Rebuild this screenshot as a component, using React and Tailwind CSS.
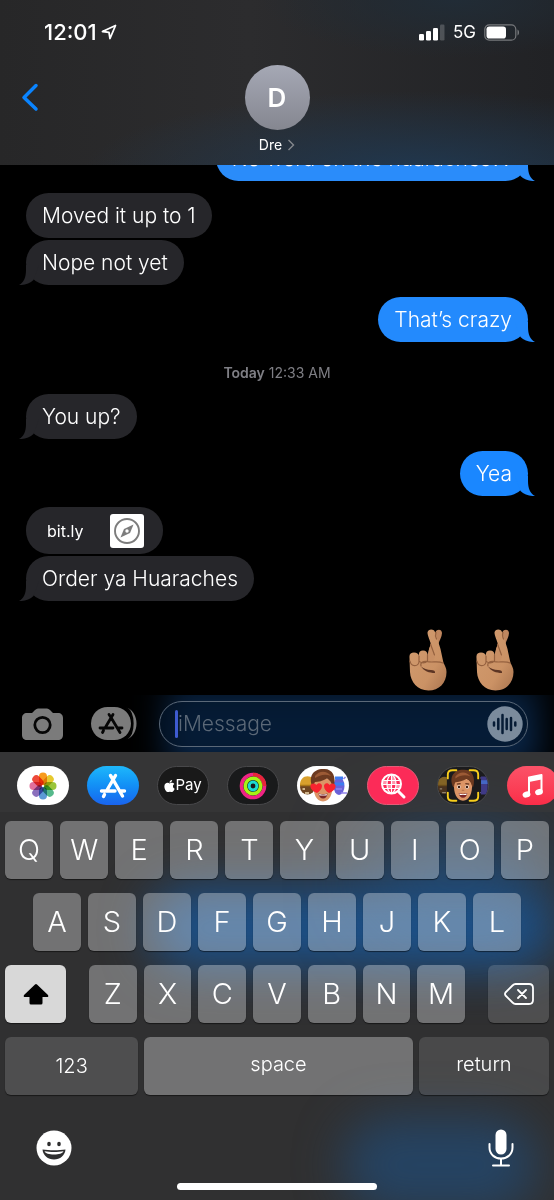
import { FaApple } from 'react-icons/fa';

function Tail({ sent }) {
  return (
    <svg
      viewBox="0 0 20 20"
      className={`absolute bottom-0 h-5 w-5 fill-current ${sent ? '-right-[7px]' : '-left-[7px] -scale-x-100'}`}
      aria-hidden="true"
    >
      <path d="M13 0V5C13 12 15 17.500 20 20C14.500 20.300 9 18.500 5.500 15L0 0Z" />
    </svg>
  );
}

function Bubble({ sent, tail, tone, children }) {
  const color = tone || (sent ? 'bg-[#1a87ff] text-[#1a87ff]' : 'bg-[#26262a] text-[#26262a]');
  return (
    <div className={`relative w-fit max-w-[80%] rounded-[23px] px-4 ${color} ${sent ? 'self-end' : 'self-start'}`}>
      {tail && <Tail sent={sent} />}
      <p className="relative whitespace-nowrap py-2 text-[21px] font-light leading-[29px] text-white">{children}</p>
    </div>
  );
}

function CrossedFingers() {
  return (
    <svg viewBox="0 0 38 62" className="h-[62px] w-[38px]" role="img" aria-label="Crossed fingers">
      <defs>
        <linearGradient id="skin" x1="0" y1="0" x2="1" y2="1">
          <stop offset="0" stopColor="#d29c70" />
          <stop offset="0.65" stopColor="#cb9265" />
          <stop offset="1" stopColor="#a9744f" />
        </linearGradient>
      </defs>
      <path d="M18 32L20 20C22 14 24 10 26.500 3C28 -0.500 33 0 33 4C33 8 30 12 29 16L26 32Z" fill="#bf865e" />
      <path
        d="M0.500 29C0 25 2 23.500 5 23.500C8 23.500 9.500 25 10 27C9.500 23 11 21.500 14 21.500C17 21.500 18.500 23 18.500 26L21 27.500L24.500 24L22 15C20 9 18.500 6 18.500 3.500C19 0 24.500 -0.500 26 3C27 7 30 14 31.500 20C32.500 25 33.500 29 34.500 34C36 37 37.500 39 37.500 43C37.500 54 30 61.500 19.500 61.500C8.500 61.500 1.500 53 1 43Z"
        fill="url(#skin)"
      />
      <path d="M18.500 26V32L24 32.500L26 28L24.500 24L22 15L20.500 19Z" fill="#c88f64" />
      <path
        d="M1 32C2 38 9 38 10 33V27M10 32C12 34.500 16 34.500 18.500 32V26M25.500 26L21.500 15M27 3.500C26 6 26.500 8 27.500 10M12 37C11 33.500 14 32 18 32.500C23 34 29 31.500 34 34"
        fill="none"
        stroke="#95613f"
        strokeWidth="1.200"
        strokeLinecap="round"
        strokeLinejoin="round"
      />
      <path d="M12 37.500C15 42 20 44 26 44C26.500 42 25 41 22 41C18 41 15 39.500 12 37.500Z" fill="#5c3524" />
    </svg>
  );
}

function StoreGlyph({ className }) {
  return (
    <svg viewBox="0 0 28 26" className={className} fill="none" stroke="currentColor" strokeWidth="3.400" strokeLinecap="round" aria-hidden="true">
      <path d="M11.500 2.500L14 6.500M16.500 2.500L7.500 18M14 6.500L23.500 23M2.500 18H16M21.500 18H25.500M5.500 21.500L4.500 23.500" />
    </svg>
  );
}

const petals = [
  ['#f89b1c', 0],
  ['#e6c92e', 45],
  ['#9bc53b', 90],
  ['#55b98b', 135],
  ['#5c9ad6', 180],
  ['#8b70bd', 225],
  ['#e0709c', 270],
  ['#ee4a3a', 315],
];

function Photos() {
  return (
    <svg viewBox="0 0 28 28" className="h-7 w-7" aria-hidden="true">
      {petals.map(([fill, turn]) => (
        <rect
          key={turn}
          x="10"
          y="0.500"
          width="8"
          height="12.500"
          rx="4"
          fill={fill}
          className="mix-blend-multiply"
          transform={`rotate(${turn} 14 14)`}
        />
      ))}
    </svg>
  );
}

function Rings() {
  return (
    <svg viewBox="0 0 28 28" className="h-7 w-7" fill="none" strokeWidth="3.600" aria-hidden="true">
      <circle cx="14" cy="14" r="11.500" stroke="#ef2484" />
      <path d="M14 2.500A11.500 11.500 0 0 1 25.500 14" stroke="#e8253a" />
      <circle cx="14" cy="14" r="7.700" stroke="#a6f315" />
      <circle cx="14" cy="14" r="3.900" stroke="#1bdcd2" strokeWidth="3" />
    </svg>
  );
}

// head shared by the sticker and memoji apps
function Face({ hearts }) {
  return (
    <g>
      <path d="M16.500 18C16 27 19 35.500 26 35.500C33 35.500 36 27 35.500 18C34 10 18 10 16.500 18Z" fill="#dc9566" />
      <path d="M15.500 21C11 11 16 3 26 3C35 2 40 10 36.500 22L35 19C34 15 32 14 30 12.500C26 15 21 16 18 16C17 17 17 19 16.500 21Z" fill="#6d3a20" />
      <path d="M18 10C22 5 29 4 34 10C28 7.500 23 9 18 12Z" fill="#9c5a35" />
      {hearts ? (
        <g fill="#f8242f">
          <path d="M20 27C12 24 12 18 16 17.500C18 17.300 19.500 19 19.500 19C21 16 25 17 25 20C25 23 22.500 25.500 20 27Z" />
          <path d="M32 27C29 25.500 27 23 27 20C27 17 31 16 32.500 19C32.500 19 34 17.300 36 17.500C40 18 40 24 32 27Z" />
        </g>
      ) : (
        <g>
          <path d="M19.500 18L23.500 17.500M28.500 17.500L32.500 18" stroke="#63341e" strokeWidth="1.200" />
          <circle cx="21.700" cy="21" r="1.800" fill="#fff" />
          <circle cx="30.300" cy="21" r="1.800" fill="#fff" />
          <circle cx="21.800" cy="21" r="1.300" fill="#3b2017" />
          <circle cx="30.200" cy="21" r="1.300" fill="#3b2017" />
          <path d="M25.200 24.500H26.800" stroke="#b06c47" strokeWidth="1.200" strokeLinecap="round" />
        </g>
      )}
      <path d="M21.500 27.500C24.500 28.500 27.500 28.500 30.500 27.500C30 31 28.500 32.500 26 32.500C23.500 32.500 22 31 21.500 27.500Z" fill="#7a2627" />
      <path d="M22 28C25 29 27 29 30 28L29.500 29.500H22.500Z" fill="#fff" />
    </g>
  );
}

function SideHeads() {
  return (
    <g>
      <circle cx="10.500" cy="21" r="7.500" fill="#6f4520" />
      <path d="M3 20C2 7 19 7 18 20Z" fill="#d9a02c" />
      <path d="M3 19.500H18" stroke="#a87518" strokeWidth="1.500" />
      <path d="M5.500 23H8M8 27H12" stroke="#f0d9b0" strokeWidth="1.400" />
      <ellipse cx="42" cy="20" rx="5.500" ry="9" fill="#6a62d8" />
      <path d="M37 18H47M38 12H46" stroke="#3e7cf0" strokeWidth="3" />
      <path d="M39 23H45M44 27H50M46.500 13L48.500 11" stroke="#9384ea" strokeWidth="1.500" />
    </g>
  );
}

function Stickers() {
  return (
    <svg viewBox="0 0 52 39" className="h-full w-full" aria-hidden="true">
      <SideHeads />
      <Face hearts />
    </svg>
  );
}

function Memoji() {
  return (
    <svg viewBox="0 0 52 39" className="h-full w-full" aria-hidden="true">
      <g opacity="0.55" transform="translate(-4 0)">
        <SideHeads />
      </g>
      <path d="M45 10H52V29H45Z" fill="#3f3a86" />
      <path d="M45 16H52" stroke="#4467c4" strokeWidth="4" />
      <rect x="9" y="1" width="35" height="36" rx="7" fill="#1b1b1d" />
      <Face />
      <path
        d="M10 12V8C10 5 12 3.500 15 3.500H19M33 3.500H37C40 3.500 42 5 42 8V12M42 27V31C42 34 40 35.500 37 35.500H33M19 35.500H15C12 35.500 10 34 10 31V27"
        fill="none"
        stroke="#f8ce1c"
        strokeWidth="2"
        strokeLinecap="round"
      />
    </svg>
  );
}

function ImageSearch() {
  return (
    <svg viewBox="0 0 28 28" className="h-7 w-7" fill="none" stroke="#fff" aria-hidden="true">
      <circle cx="12.500" cy="12" r="9.500" strokeWidth="2" />
      <ellipse cx="12.500" cy="12" rx="4.500" ry="9" strokeWidth="1.200" />
      <path d="M12.500 3V21M4.500 8.500H20.500M3 12.500H22M4.500 16.500H20.500" strokeWidth="1.200" />
      <path d="M4 8.500H8.500V12.500H3.500ZM12.500 8.500H17V12.500H12.500ZM8.500 12.500H12.500V16.500H8.500ZM17 12.500H21.500L20 16.500H17ZM12.500 3H15L17 8.500H12.500Z" fill="#fff" fillOpacity="0.5" stroke="none" />
      <path d="M19.500 19.500L25 25" strokeWidth="3" strokeLinecap="round" />
    </svg>
  );
}

function Music() {
  return (
    <svg viewBox="0 0 24 28" className="h-7 w-6" aria-hidden="true">
      <path d="M8 21V5.500L20.500 3V19" fill="none" stroke="#fff" strokeWidth="2" strokeLinejoin="round" />
      <path d="M8 5.500L20.500 3V7.500L8 10Z" fill="#fff" />
      <ellipse cx="5.500" cy="22.500" rx="4" ry="3" fill="#fff" transform="rotate(-20 5.500 22.500)" />
      <ellipse cx="18" cy="20" rx="4" ry="3" fill="#fff" transform="rotate(-20 18 20)" />
    </svg>
  );
}

const apps = [
  { name: 'Photos', style: 'bg-white', icon: <Photos /> },
  { name: 'App Store', style: 'bg-linear-to-b from-[#1fb8fb] to-[#1a63ee]', icon: <StoreGlyph className="h-[26px] w-7 text-white" /> },
  {
    name: 'Apple Pay',
    style: 'bg-[#191919] border border-[#48484a]',
    icon: (
      <span className="flex items-center text-[15px] text-white">
        <FaApple className="h-[14px] w-[11px]" />
        Pay
      </span>
    ),
  },
  { name: 'Fitness', style: 'bg-[#191a1b] border border-[#48484a]', icon: <Rings /> },
  { name: 'Memoji stickers', style: 'bg-white', icon: <Stickers /> },
  { name: 'Images', style: 'bg-[#fc2b58] border border-[#e55b77]', icon: <ImageSearch /> },
  { name: 'Memoji', style: 'bg-[#1b1b1d] border border-[#48484a]', icon: <Memoji /> },
  { name: 'Music', style: 'bg-linear-to-b from-[#fb5268] to-[#fa2c48]', icon: <Music /> },
];

function Key({ children, className = 'flex-1 bg-white/32 text-[29px]', ...rest }) {
  return (
    <button
      type="button"
      className={`flex h-[58px] min-w-0 items-center justify-center rounded-md font-light text-white shadow-[0_1px_1px_rgba(0,0,0,0.5)] ${className}`}
      {...rest}
    >
      {children}
    </button>
  );
}

function StatusBar() {
  return (
    <div className="flex h-16 items-center justify-between pl-11 pr-[35px] text-white">
      <div className="flex items-center gap-1">
        <span className="text-[22px] font-medium leading-6">12:01</span>
        <svg viewBox="0 0 16 16" className="h-4 w-4" fill="none" stroke="currentColor" strokeWidth="1.800" strokeLinejoin="round" aria-hidden="true">
          <path d="M14.500 1.500L1.500 7.500L8 8.300L9 14.500Z" />
        </svg>
      </div>
      <div className="flex items-center gap-2">
        <svg viewBox="0 0 26 17" className="h-[17px] w-[26px]" fill="currentColor" aria-hidden="true">
          <rect x="0" y="10" width="5" height="6.500" rx="1.300" />
          <rect x="7" y="7" width="5" height="9.500" rx="1.300" />
          <rect x="14" y="4" width="5" height="12.500" rx="1.300" />
          <rect x="21" y="0.500" width="4.500" height="16" rx="1.300" opacity="0.2" />
        </svg>
        <span className="text-[17px] leading-6">5G</span>
        <svg viewBox="0 0 35 17" className="h-[17px] w-[35px]" aria-hidden="true">
          <rect x="0.800" y="0.800" width="31" height="15.400" rx="4.500" fill="none" stroke="#77797c" strokeWidth="1.200" />
          <rect x="2.500" y="2.500" width="19.500" height="12" rx="2.800" fill="#fff" />
          <path d="M33.500 5.500C35.500 6.500 35.500 10.500 33.500 11.500Z" fill="#77797c" />
        </svg>
      </div>
    </div>
  );
}

function Header() {
  return (
    <header className="relative h-[165px] shrink-0 overflow-hidden bg-[radial-gradient(ellipse_60%_50%_at_75%_105%,#203850,transparent),radial-gradient(ellipse_35%_35%_at_82%_0%,#212c36,transparent),linear-gradient(to_right,#272728,#2c2c2e_45%,#212225)]">
      <StatusBar />
      <div className="grid grid-cols-[1fr_auto_1fr] items-start">
        <button type="button" aria-label="Back" className="ml-5 mt-[18px] w-fit text-[#0a84ff]">
          <svg viewBox="0 0 20 30" className="h-[30px] w-5" fill="none" stroke="currentColor" strokeWidth="3.500" strokeLinecap="round" strokeLinejoin="round">
            <path d="M16 3.500L4 15.500L16 27" />
          </svg>
        </button>
        <button type="button" className="flex flex-col items-center text-white">
          <span className="mt-px flex size-[65px] items-center justify-center rounded-full bg-linear-to-b from-[#a5a8b5] to-[#858790] text-[26px] font-semibold">
            D
          </span>
          <span className="mt-[7px] flex items-center gap-[5px] text-sm leading-[15px]">
            Dre
            <svg viewBox="0 0 8 12" className="h-3 w-2" fill="none" stroke="#85888d" strokeWidth="1.400" aria-hidden="true">
              <path d="M1.500 1L6.500 6L1.500 11" />
            </svg>
          </span>
        </button>
      </div>
    </header>
  );
}

function Messages() {
  return (
    <main className="flex min-h-0 flex-1 flex-col justify-end overflow-hidden px-[26px] pb-1">
      <Bubble sent tail tone="bg-[#2a8cfa] text-[#2a8cfa]">No word on the huaraches??</Bubble>
      <div className="mt-3 flex flex-col gap-[2px]">
        <Bubble>Moved it up to 1</Bubble>
        <Bubble tail>Nope not yet</Bubble>
      </div>
      <div className="mt-3 flex flex-col">
        <Bubble sent tail tone="bg-[#238afd] text-[#238afd]">That’s crazy</Bubble>
      </div>
      <p className="mb-4 mt-[26px] text-center text-sm leading-[10px] text-[#7f7f85]">
        <span className="font-semibold">Today</span> 12:33 AM
      </p>
      <Bubble tail>You up?</Bubble>
      <div className="mt-3 flex flex-col">
        <Bubble sent tail>Yea</Bubble>
      </div>
      <div className="mt-[11px] flex flex-col gap-[2px]">
        <a href="https://bit.ly" className="flex h-[47px] w-[137px] items-center justify-between rounded-[23px] bg-[#26262a] pl-[21px] pr-[19px] text-white">
          <span className="text-base leading-5">bit.ly</span>
          <svg viewBox="0 0 34 34" className="size-[34px]" aria-hidden="true">
            <rect width="34" height="34" rx="3" fill="#fff" />
            <circle cx="17" cy="17" r="12" fill="none" stroke="#7c7c7c" strokeWidth="1.900" />
            <path d="M23.500 10.500L20 19L10.500 23.500L14 15Z" fill="#7c7c7c" />
            <circle cx="17" cy="17" r="1.700" fill="#fff" />
          </svg>
        </a>
        <Bubble tail>Order ya Huaraches</Bubble>
      </div>
      <div className="mt-7 flex shrink-0 justify-end gap-[29px] pr-[14px]">
        <CrossedFingers />
        <CrossedFingers />
      </div>
    </main>
  );
}

function Composer() {
  return (
    <form className="relative flex h-[57px] shrink-0 items-center overflow-hidden bg-black pl-[22px] pr-[26px]">
      <div className="absolute -inset-y-3 left-[30%] right-4 bg-linear-to-b from-[#071d37] to-[#0b2b52] blur-lg" />
      <button type="button" aria-label="Camera" className="relative">
        <svg viewBox="0 0 41 32" className="h-8 w-[41px]" aria-hidden="true">
          <path d="M5 5H10L13 2C14 1 15 0.500 16 0.500H25C26 0.500 27 1 28 2L31 5H36C39 5 41 7 41 10V27C41 30 39 32 36 32H5C2 32 0 30 0 27V10C0 7 2 5 5 5Z" fill="#7b7b7b" />
          <circle cx="20.500" cy="17" r="7.700" fill="none" stroke="#060606" strokeWidth="2.800" />
        </svg>
      </button>
      <button type="button" aria-label="Apps" className="relative ml-7">
        <svg viewBox="0 0 46 33" className="h-[33px] w-[46px]" aria-hidden="true">
          <rect width="40" height="33" rx="16.500" fill="#7b7b7b" />
          <path d="M36.500 1C48.500 6 48.500 27 36.500 32C43 26 43 7 36.500 1Z" fill="#7b7b7b" />
          <path d="M35 0.500C44 6 44 27 35 32.500" fill="none" stroke="#030303" strokeWidth="1.800" />
          <path d="M18 7.500L20 10.500M22 7.500L14 21M20 10.500L29 25.500M9 21H22M27 21H31M12.500 23.500L11.500 25.500" fill="none" stroke="#060606" strokeWidth="2.800" strokeLinecap="round" />
        </svg>
      </button>
      <div className="relative ml-[22px] flex h-[46px] min-w-0 flex-1 items-center rounded-full border border-[#5a6878] bg-[#04152b]/60 pl-[15px] pr-1">
        <span className="h-7 w-[3px] rounded-full bg-[#3e5bd0]" />
        <input
          aria-label="iMessage"
          placeholder="iMessage"
          className="min-w-0 flex-1 bg-transparent text-[21px] font-light text-white outline-none placeholder:text-[#5b6877]"
        />
        <button type="button" aria-label="Record audio" className="shrink-0">
          <svg viewBox="0 0 36 36" className="size-9" aria-hidden="true">
            <circle cx="18" cy="18" r="17.700" fill="#7b8b9c" />
            <path d="M7 16.500V19.500M11.300 13V23M15.500 9V27M19.700 13V23M24 12V24M28.300 16.500V19.500" stroke="#071c35" strokeWidth="2.500" strokeLinecap="round" />
          </svg>
        </button>
      </div>
    </form>
  );
}

function Keyboard() {
  return (
    <section aria-label="Keyboard" className="relative h-[448px] shrink-0 overflow-hidden bg-[#303031]">
      <div className="absolute left-[27%] right-0 top-[136px] h-20 rounded-full bg-[#1c5088] blur-xl" />
      <div className="absolute left-[66%] right-2 top-[76px] h-24 rounded-full bg-[#1c548c]/60 blur-2xl" />
      <div className="absolute left-[62%] right-4 top-[365px] h-24 rounded-full bg-[#214c78]/70 blur-xl" />
      <div className="absolute inset-x-0 top-0 h-[60px] bg-[#38383a]/60" />
      <div className="relative">
        <div className="flex gap-[18px] overflow-hidden pl-[17px] pt-[14px]">
          {apps.map(app => (
            <button
              key={app.name}
              type="button"
              aria-label={app.name}
              className={`flex h-[39px] w-[52px] shrink-0 items-center justify-center overflow-hidden rounded-full ${app.style}`}
            >
              {app.icon}
            </button>
          ))}
        </div>
        <div className="mt-4 flex flex-col gap-[14px] px-[5px]">
          <div className="flex gap-[7px]">
            {[...'QWERTYUIOP'].map(letter => <Key key={letter}>{letter}</Key>)}
          </div>
          <div className="flex gap-[7px] px-7">
            {[...'ASDFGHJKL'].map(letter => <Key key={letter}>{letter}</Key>)}
          </div>
          <div className="flex gap-[23px]">
            <Key className="w-[61px] bg-[#d8d8d8]" aria-label="Shift">
              <svg viewBox="0 0 26 22" className="h-[22px] w-[26px]" aria-hidden="true">
                <path d="M12 1.500Q13 0.500 14 1.500L25 12Q26 14 24 14H19.500V20Q19.500 21.500 18 21.500H8Q6.500 21.500 6.500 20V14H2Q0 14 1 12Z" fill="#000" />
              </svg>
            </Key>
            <div className="flex min-w-0 flex-1 gap-[7px]">
              {[...'ZXCVBNM'].map(letter => <Key key={letter}>{letter}</Key>)}
            </div>
            <Key className="w-[61px] bg-white/15" aria-label="Delete">
              <svg viewBox="0 0 30 22" className="h-[22px] w-[30px]" fill="none" stroke="currentColor" strokeWidth="1.800" strokeLinecap="round" strokeLinejoin="round" aria-hidden="true">
                <path d="M11.500 1H25Q29 1 29 5V17Q29 21 25 21H11.500Q10 21 8.500 19.500L1.500 12.500Q0.500 11 1.500 9.500L8.500 2.500Q10 1 11.500 1ZM14 7L22 15M22 7L14 15" />
              </svg>
            </Key>
          </div>
          <div className="grid grid-cols-[133fr_268fr_130fr] gap-[6px]">
            <Key className="bg-white/15 text-xl">123</Key>
            <Key className="bg-white/32 pb-1 text-xl">space</Key>
            <Key className="bg-white/12 pb-1 text-xl">return</Key>
          </div>
        </div>
        <div className="mt-[34px] flex items-center justify-between pl-9 pr-10">
          <button type="button" aria-label="Emoji">
            <svg viewBox="0 0 36 36" className="size-9" aria-hidden="true">
              <circle cx="18" cy="18" r="17.500" fill="#fff" />
              <ellipse cx="13" cy="14" rx="1.800" ry="2.300" fill="#2e2e2f" />
              <ellipse cx="23" cy="14" rx="1.800" ry="2.300" fill="#2e2e2f" />
              <path d="M6.500 19.500C13 20.500 23 20.500 29.500 19.500C29 25.500 24 29.500 18 29.500C12 29.500 7 25.500 6.500 19.500Z" fill="#2e2e2f" />
              <path d="M8.500 21.300C14 22.300 22 22.300 27.500 21.300C26.500 23.500 23 24.500 18 24.500C13 24.500 9.500 23.500 8.500 21.300Z" fill="#fff" />
            </svg>
          </button>
          <button type="button" aria-label="Dictate">
            <svg viewBox="0 0 26 38" className="h-[38px] w-[26px]" aria-hidden="true">
              <rect x="7.500" y="0.500" width="11" height="25" rx="5.500" fill="#fff" />
              <path d="M1.500 15V18.500C1.500 25 6.500 29.500 13 29.500C19.500 29.500 24.500 25 24.500 18.500V15M13 29.500V36M5 36.500H21" fill="none" stroke="#fff" strokeWidth="2" strokeLinecap="round" />
            </svg>
          </button>
        </div>
        <div className="mx-auto mt-4 h-[7px] w-[36%] rounded-full bg-white" />
      </div>
    </section>
  );
}

export default function App() {
  return (
    <div className="flex h-screen flex-col overflow-hidden bg-black font-[Inter,sans-serif]">
      <Header />
      <Messages />
      <Composer />
      <Keyboard />
    </div>
  );
}
